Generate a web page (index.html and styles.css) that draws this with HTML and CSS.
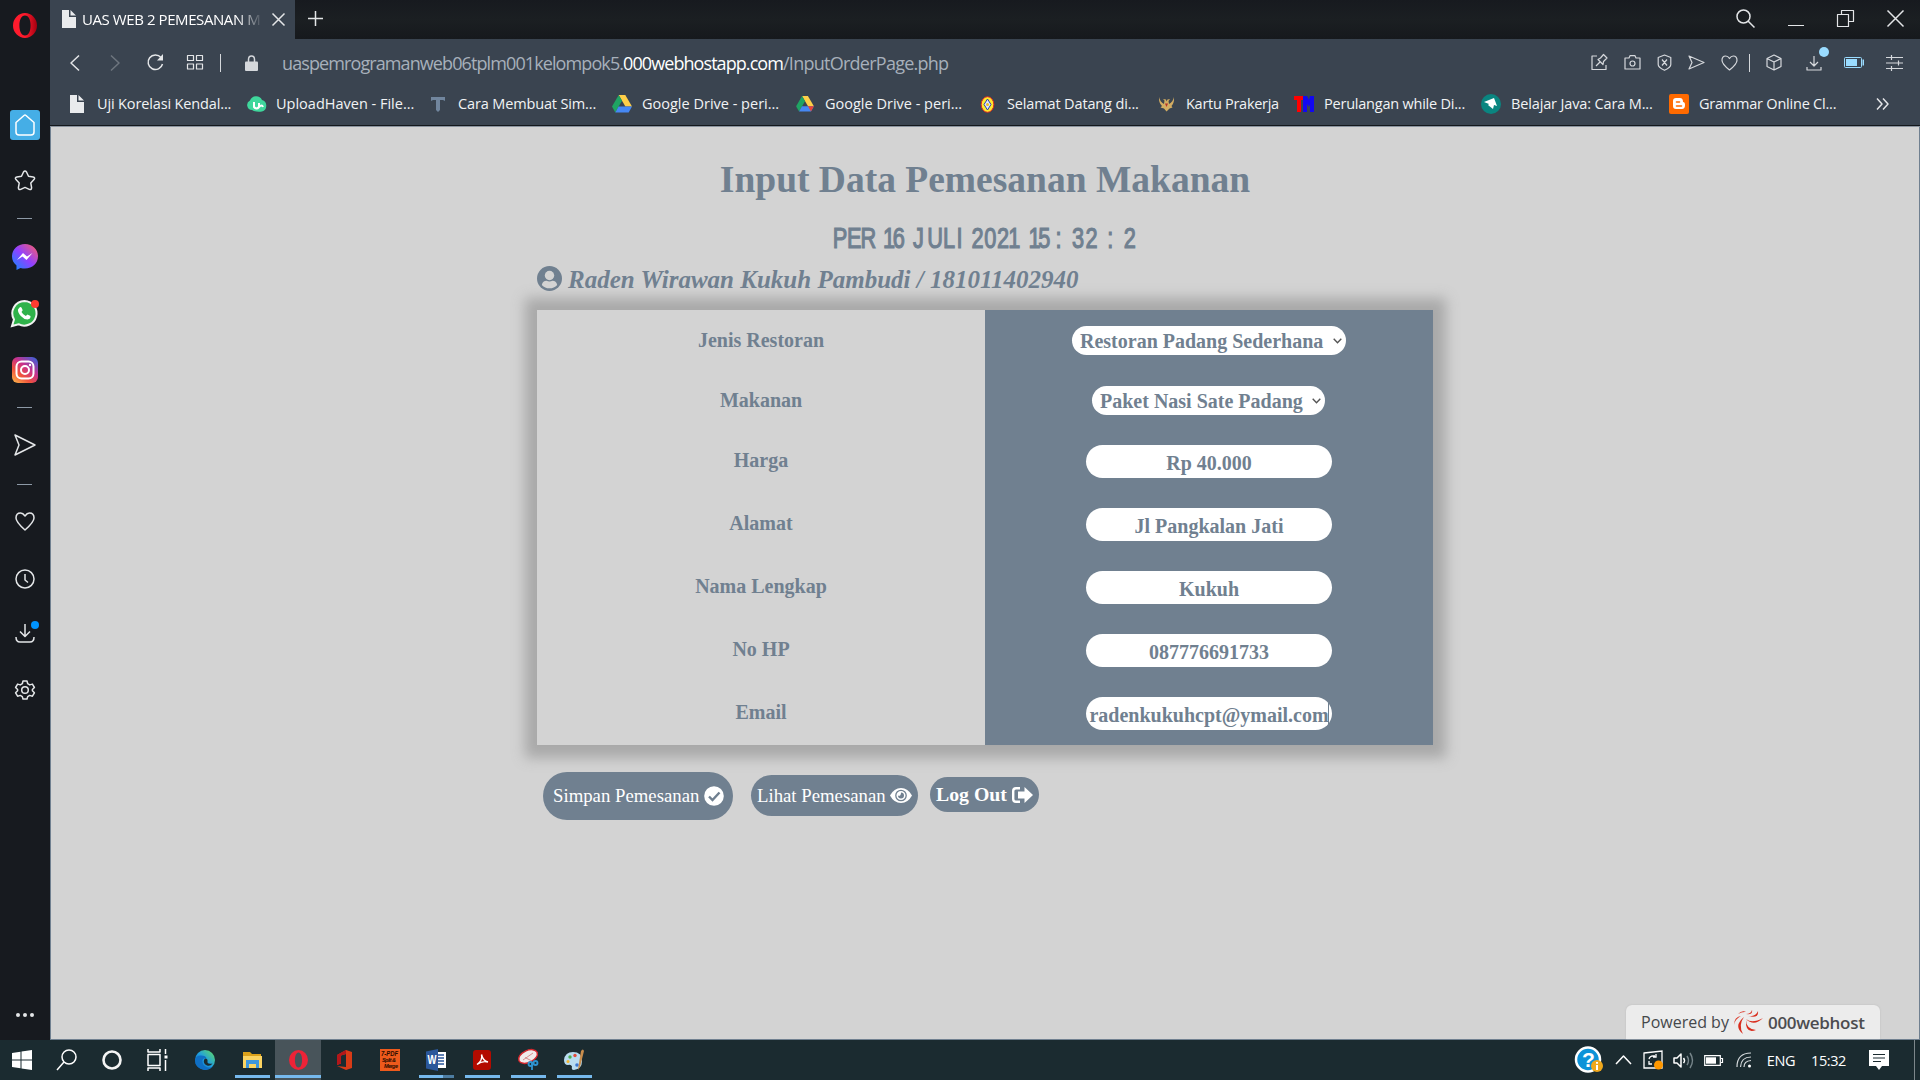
FILE: index.html
```html
<!DOCTYPE html>
<html lang="id">
<head>
<meta charset="utf-8">
<title>UAS WEB 2 PEMESANAN MAKANAN</title>
<link rel="stylesheet" href="styles.css">
</head>
<body>
<svg width="0" height="0" class="defs">
  <defs>
    <linearGradient id="gOpera" x1="0" x2="1"><stop offset="0" stop-color="#ff1b2d"/><stop offset=".5" stop-color="#ff1b2d"/><stop offset="1" stop-color="#a30010"/></linearGradient>
    <linearGradient id="gMsg" x1="0" y1="1" x2="1" y2="0"><stop offset="0" stop-color="#0a8cff"/><stop offset=".5" stop-color="#9240ff"/><stop offset="1" stop-color="#ff6060"/></linearGradient>
    <linearGradient id="gInsta" x1="0" y1="1" x2=".8" y2="0"><stop offset="0" stop-color="#fdc04c"/><stop offset=".35" stop-color="#f0533c"/><stop offset=".65" stop-color="#c8318c"/><stop offset="1" stop-color="#4b5bd0"/></linearGradient>
    <linearGradient id="gEdge" x1="0" y1="1" x2="1" y2="0"><stop offset="0" stop-color="#0b62b8"/><stop offset=".5" stop-color="#1e9de0"/><stop offset="1" stop-color="#66e05c"/></linearGradient>
    <symbol id="drive" viewBox="0 0 20 18"><path d="M6.7 0h6.6L20 11.6h-6.6z" fill="#ffcf48"/><path d="M6.7 0L0 11.6 3.3 17.5 10 5.8z" fill="#1fa463"/><path d="M6.6 11.6H20l-3.3 5.9H3.3z" fill="#4688f4"/></symbol>
    <symbol id="page" viewBox="0 0 14 18"><path d="M0 0h7v7h7v11H0z M8.5 0L14 5.5H8.5z" fill="#e9ebed"/></symbol>
  </defs>
</svg>
<div class="screen">
  <aside class="sidebar">
    <span><svg width="24" height="25"><path d="M12 0a12 12.5 0 1 0 0 25a12 12.5 0 1 0 0-25zM12 2.5c3.8 0 5.6 4.7 5.6 10s-1.8 10-5.6 10-5.6-4.700-5.600-10 1.800-10 5.600-10z" fill="url(#gOpera)" fill-rule="evenodd"/></svg></span>
    <i></i>
    <span><b class="home"><svg width="20" height="22" class="ln"><path d="M1 8.500L9 1.500q1-.8 2 0l8 7V18q0 3-3 3H4q-3 0-3-3z"/></svg></b></span>
    <span><svg width="22" height="21" class="ln"><path d="M9.500 2q1.500-2 3 0l2 4.300 4.600.7q2.500.6.900 2.600l-3.200 3.500.8 4.500q0 2.600-2.300 1.800L11 17.400l-4.300 2q-2.300.8-2.300-1.800l.8-4.500L2 9.600Q.4 7.600 2.900 7l4.600-.7z"/></svg></span>
    <span><hr></span>
    <span><svg width="26" height="26"><path d="M13 0C5.500 0 0 5.300 0 12.500c0 3.700 1.600 6.500 4.500 9V26l4-2.100c1.400.5 3 .7 4.500.7 7.400 0 13-5.300 13-12.300S20.400 0 13 0z" fill="url(#gMsg)"/><path d="M5 16l6-7 4 3.500 5.500-3.500-6 7-4-3.500z" fill="#fff"/></svg></span>
    <span class="badged"><svg width="27" height="27"><path d="M13.500 1A12.300 12.300 0 0 0 3 19.500L1 26l6.500-1.800A12.300 12.300 0 1 0 13.500 1z" fill="#2fb24a" stroke="#f2f2f2" stroke-width="2"/><path d="M8.500 7.500q1.500-1 2.200.5l1 2.200-1.200 1.700q1.400 2.700 4.300 4l1.700-1.500 3 1.500q.4 3-3 3.500-3.500 0-6.700-3.500T7 9.500z" fill="#fff"/></svg><em class="red"></em></span>
    <span><svg width="26" height="26"><rect width="26" height="26" rx="6" fill="url(#gInsta)"/><g fill="none" stroke="#fff" stroke-width="2"><rect x="4.500" y="4.500" width="17" height="17" rx="5"/><circle cx="13" cy="13" r="4"/></g><circle cx="18" cy="8" r="1.200" fill="#fff"/></svg></span>
    <span><hr></span>
    <span><svg width="22" height="22" class="ln"><path d="M1 1l20 10L1 21l4-10z"/></svg></span>
    <span><hr></span>
    <span><svg width="20" height="19" class="ln"><path d="M10 4Q8 1 5.500 1 1 1 1 6q0 4 9 12 9-8 9-12 0-5-4.500-5Q12 1 10 4z"/></svg></span>
    <span><svg width="20" height="20" class="ln"><circle cx="10" cy="10" r="9"/><path d="M10 5v6l3 2.500"/></svg></span>
    <span class="badged"><svg width="20" height="19" class="ln"><path d="M10 0v12M5 7.500l5 5 5-5M1 13q0 5 4 5h10q4 0 4-5"/></svg><em class="blue"></em></span>
    <span><svg width="20" height="20" class="ln"><path d="M8 1h4l.7 2.700 2 1.200 2.700-.8 2 3.400-2 2v1.300l2 2-2 3.400-2.700-.8-2 1.200L12 19H8l-.7-2.400-2-1.200-2.700.8-2-3.400 2-2V9.500l-2-2 2-3.400 2.700.8 2-1.200z"/><circle cx="10" cy="10" r="3.300"/></svg></span>
    <i></i>
    <span><svg width="18" height="4" fill="#e4e6e8"><circle cx="2" cy="2" r="2"/><circle cx="9" cy="2" r="2"/><circle cx="16" cy="2" r="2"/></svg></span>
  </aside>

  <header class="chrome">
    <div class="tabs">
      <div class="tab"><svg width="14" height="18"><use href="#page"/></svg><span class="tabtitle">UAS WEB 2 PEMESANAN M</span><svg width="13" height="13" class="ln"><path d="M.5.500l12 12M12.500.500l-12 12"/></svg></div>
      <svg width="15" height="15" class="ln plus"><path d="M7.500 0v15M0 7.500h15"/></svg>
      <div class="wctl">
        <svg width="19" height="19" class="ln"><circle cx="7.500" cy="7.500" r="6.500"/><path d="M12 12l6.500 6.500"/></svg>
        <svg width="16" height="17" class="ln"><path d="M0 15.500h16" stroke-width="1"/></svg>
        <svg width="17" height="17" class="ln th"><path d="M.5 4.500h11v12H.5zM4.500 4.500v-4h12v11h-5"/></svg>
        <svg width="17" height="17" class="ln"><path d="M.5.500l16 16M16.500.500l-16 16"/></svg>
      </div>
    </div>
    <div class="nav">
      <span><svg width="10" height="16" class="ln"><path d="M9 0.500L1 8l8 7.500"/></svg></span>
      <span class="off"><svg width="10" height="16" class="ln"><path d="M1 .5L9 8l-8 7.500"/></svg></span>
      <span><svg width="17" height="17" class="ln"><path d="M14 3.500A7.300 7.300 0 1 0 15.500 10"/><path d="M16 0v6.500h-6z" fill="#e4e6e8" stroke="none"/></svg></span>
      <span><svg width="16" height="15" class="ln th"><path d="M.5.500h6v5h-6zM9.500.500h6v5h-6zM.5 9h6v5h-6zM9.500 9h6v5h-6z"/></svg></span>
      <span><b class="sep"></b></span>
      <span><svg width="13" height="16"><path d="M3.500 7V4.500q0-3.500 3-3.500t3 3.500V7" fill="none" stroke="#d5d8dc" stroke-width="1.500"/><rect y="6.500" width="13" height="9.500" rx="1" fill="#d5d8dc"/></svg></span>
      <div class="url"><span class="u1">uaspemrogramanweb06tplm001kelompok5.</span><span class="u2">000webhostapp.com</span><span class="u3">/InputOrderPage.php</span></div>
      <div class="tools">
        <span><svg width="17" height="17" class="ln"><path d="M6 2H1v13.500h14V11M5 12l4-4M7 5.500l5 5 .5-3L16 4l-3.500-3.500L9.500 4z"/></svg></span>
        <span><svg width="17" height="15" class="ln"><path d="M1 3h4l1-2.300h5L12 3h4v11H1z"/><circle cx="8.500" cy="8.500" r="2.500"/></svg></span>
        <span><svg width="15" height="17" class="ln"><path d="M7.500 1l6.300 2.500v7q0 3-6.300 5.800Q1.200 13.500 1.200 10.500v-7zM5 5.500l5 6M10 5.500l-5 6"/></svg></span>
        <span><svg width="17" height="15" class="ln"><path d="M1 1l15 6.500L1 14l3-6.500z"/></svg></span>
        <span><svg width="17" height="16" class="ln"><path d="M8.500 3.500Q7 1 4.700 1 1 1 1 5.200 1 9 8.500 15 16 9 16 5.200 16 1 12.300 1 10 1 8.500 3.500z"/></svg></span>
        <span><b class="sep"></b></span>
        <span><svg width="16" height="17" class="ln"><path d="M8 1l7 3.500v8L8 16l-7-3.500v-8zM1 4.500L8 8l7-3.500M8 8v8"/></svg></span>
        <span class="badged"><svg width="16" height="16" class="ln"><path d="M8 1v10M4 7l4 4 4-4M1 12v3h14v-3"/></svg><em class="sky"></em></span>
        <span><svg width="20" height="11"><rect x=".5" y=".5" width="17" height="10" rx="1" fill="none" stroke="#9adcff"/><rect x="2" y="2" width="11" height="7" fill="#9adcff"/><path d="M18.500 2.500h1.500v6h-1.500z" fill="#9adcff"/></svg></span>
        <span><svg width="17" height="16" class="ln th"><path d="M0 2.500h17M0 8h17M0 13.500h17M5.500 0v5M12.500 5.500v5M5.500 11v5"/></svg></span>
      </div>
    </div>
    <nav class="marks">
      <a><s><svg width="14" height="18"><use href="#page"/></svg></s><span>Uji Korelasi Kendal...</span></a>
      <a class="w1"><s><svg width="20" height="16"><path d="M6 14a5 5 0 0 1-2-9.500A6.500 6.500 0 0 1 16 4a6 6 0 0 1 0 11.500q-6 1-10-1.500z" fill="#3fd79c"/><path d="M8 6v5q2.500 3 5 0V7m0 4q3-3 4 0" fill="none" stroke="#fff" stroke-width="2"/></svg></s><span>UploadHaven - File...</span></a>
      <a><s><svg width="16" height="16"><path d="M1 1h14v4l-2-1h-3v10l-2 2-2-2V4H3L1 5z" fill="#71869e"/></svg></s><span>Cara Membuat Sim...</span></a>
      <a class="w1"><s><svg width="20" height="18"><use href="#drive"/></svg></s><span>Google Drive - peri...</span></a>
      <a class="w1"><s><svg width="18" height="16" viewBox="0 0 20 18"><use href="#drive"/><path d="M13.400 11.600H20l-3.300 5.900z" fill="#ea4335"/></svg></s><span>Google Drive - peri...</span></a>
      <a><s><svg width="15" height="17"><ellipse cx="7.500" cy="8.500" rx="6.300" ry="7.800" fill="#ffe92e" stroke="#e02a20"/><path d="M7.500 3l3.500 5.500-3.500 5.500L4 8.500z" fill="#dfe8ff" stroke="#2b3fae"/><circle cx="7.500" cy="8.500" r="1.500" fill="#f0c020"/></svg></s><span>Selamat Datang di...</span></a>
      <a class="w0"><s><svg width="15" height="15"><path d="M0 0q1 5 5 7l.5-3.500L4 2l3 .5.500 2 1-2L11 2 9.500 4l.5 3q4-2 5-7 .5 6-2.500 9l1 1.500-3 1L7.500 14.500 5 11.500l-3.500-1L3 9Q-.5 6 0 0z" fill="#d3ad62"/><path d="M6 6.500h3L7.500 10z" fill="#b3322a"/></svg></s><span>Kartu Prakerja</span></a>
      <a class="w2"><s><svg width="20" height="16"><path d="M0 0h9v4H7v12H3V4H0z" fill="#f00"/><path d="M9 0h4l2 4 1-4h4v16h-4V8l-1 3-2-3v8H9z" fill="#1208f0"/></svg></s><span>Perulangan while Di...</span></a>
      <a><s><svg width="20" height="20"><circle cx="10" cy="10" r="10" fill="#0a8580"/><path d="M3 8l10-4 3 8-3-1-1 4-5-4 1-1z" fill="#fff"/></svg></s><span>Belajar Java: Cara M...</span></a>
      <a class="w2"><s><svg width="20" height="20"><rect width="20" height="20" rx="2" fill="#ff6a00"/><path d="M7 4h4q3 0 3 4 2 0 2 3 0 4-3 4H7q-3 0-3-3V7q0-3 3-3z" fill="#fff"/><path d="M7.500 8h3M7.500 12h5" stroke="#ff6a00" stroke-width="1.600" stroke-linecap="round"/></svg></s><span>Grammar Online Cl...</span></a>
      <svg width="13" height="12" class="ln more"><path d="M1 0.500l5 5.500-5 5.500M7 .5L12 6l-5 5.500"/></svg>
    </nav>
  </header>

  <main class="page">
    <h1>Input Data Pemesanan Makanan</h1>
    <svg class="clock" width="306" height="24">
      <text transform="scale(.75 1)" y="21" x="1 20 38 60 68 81 100 108 127 148 166 175 186 203 220 235 252 262 275 290 298 310 320 338 360 367 380 389">PER 16 JULI 2021 15 : 32 : 2</text>
    </svg>
    <section class="form">
      <h2><svg width="25" height="25" viewBox="0 0 25 25"><circle cx="12.500" cy="12.500" r="12.500" fill="#708090"/><circle cx="12.500" cy="9.500" r="4.700" fill="#d3d3d3"/><path d="M4.800 19q1-4.200 4.700-4.200 3 1.200 6 0 3.700 0 4.700 4.200a10.500 10.500 0 0 1-15.400 0z" fill="#d3d3d3"/></svg><span>Raden Wirawan Kukuh Pambudi / 181011402940</span></h2>
      <div class="table">
        <div class="labels"><label>Jenis Restoran</label><label>Makanan</label><label>Harga</label><label>Alamat</label><label>Nama Lengkap</label><label>No HP</label><label>Email</label></div>
        <div class="fields">
          <div><p class="sel s1"><span>Restoran Padang Sederhana</span><svg width="9" height="6"><path d="M.7.700l3.800 4 3.800-4" fill="none" stroke="#555" stroke-width="1.400"/></svg></p></div>
          <div><p class="sel s2"><span>Paket Nasi Sate Padang</span><svg width="9" height="6"><path d="M.7.700l3.800 4 3.800-4" fill="none" stroke="#555" stroke-width="1.400"/></svg></p></div>
          <div><p class="inp">Rp 40.000</p></div>
          <div><p class="inp">Jl Pangkalan Jati</p></div>
          <div><p class="inp">Kukuh</p></div>
          <div><p class="inp">087776691733</p></div>
          <div><p class="inp focus">radenkukuhcpt@ymail.com</p></div>
        </div>
      </div>
      <div class="buttons">
        <button class="b1">Simpan Pemesanan<svg width="20" height="20"><circle cx="10" cy="10" r="9.800" fill="#fff"/><path d="M5 10.500l3.500 3.500 7-7.500" fill="none" stroke="#708090" stroke-width="2.400"/></svg></button>
        <button class="b2">Lihat Pemesanan<svg width="22" height="15"><path d="M0 7.500Q4 0 11 0t11 7.500Q18 15 11 15T0 7.500z" fill="#fff"/><circle cx="11" cy="7.500" r="5.200" fill="none" stroke="#708090" stroke-width="1.300"/><path d="M11 4.500a3 3 0 1 1-3 3q1.500.7 2.300-.3T11 4.500z" fill="#708090"/></svg></button>
        <button class="b3">Log Out<svg width="21" height="16"><path d="M8 1.200H4Q1.200 1.200 1.200 4v8q0 2.800 2.800 2.800h4" fill="none" stroke="#fff" stroke-width="2.400"/><path d="M12.500 0L21 8l-8.500 8v-4.500H6v-7h6.500z" fill="#fff"/></svg></button>
      </div>
    </section>
    <div class="powered"><span class="pw">Powered by</span><svg width="29" height="24"><g fill="#d92c1c"><path d="M10 7q-6 8-1 17Q-1 16 10 7z"/><path d="M12 10q0 9 10 10-11 4-10-10z"/><path d="M12 9q6 5 17-1-9 9-17 1z"/><path d="M14 6q8 1 10-5 1 8-10 5z"/><path d="M7 6q-6 3-7 9 0-8 7-9zM12 4q5 0 6-4 1 5-6 4zM4 4q4-4 8-2-4-.5-8 2z"/></g></svg><span class="wh">000webhost</span></div>
  </main>

  <footer class="taskbar">
    <span><svg width="20" height="20" fill="#fff"><path d="M0 3l8.500-1.200v7.700H0zM9.500 1.600L20 0v9.500H9.500zM0 10.500h8.500v7.700L0 17zM9.500 10.500H20V20L9.500 18.400z"/></svg></span>
    <span><svg width="21" height="22" class="ln w"><circle cx="13" cy="8" r="7"/><path d="M8 13l-7 8"/></svg></span>
    <span><svg width="20" height="20"><circle cx="10" cy="10" r="8.500" fill="none" stroke="#f4f4f4" stroke-width="2.600"/></svg></span>
    <span><svg width="21" height="22" class="ln w"><path d="M1 0v3h12V0M1 22v-3h12v3M1 5.500h12v11H1zM18.500 0v5M18.500 11v11"/><path d="M17.500 6.500h3v3h-3z" fill="#fff" stroke="none"/></svg></span>
    <span><svg width="20" height="20"><circle cx="10" cy="10" r="10" fill="url(#gEdge)"/><path d="M0 10Q1 5 6 5.500q5 0 5.500 3-3-1-4 1.500-1 5 4 7 3 1 6 0-4 4-9 2.700Q0 18 0 10z" fill="#0f6fc4"/><path d="M10 8.500q3 0 2.500 3-.5 3 5 2-2 3-5.500 2-4-2-3-5.500z" fill="#1b2b30"/></svg></span>
    <span class="run"><svg width="19" height="18"><path d="M0 1h7l2 2h9v3H0z" fill="#dca11a"/><path d="M0 5h19v12H0z" fill="#fcd462"/><path d="M3 17V9h13v8h-3v-4H6v4z" fill="#3f97dd"/></svg></span>
    <span class="run active"><svg width="19" height="20" viewBox="0 0 24 25"><path d="M12 0a12 12.500 0 1 0 0 25a12 12.500 0 1 0 0-25zM12 3c3 0 4.500 4.700 4.500 9.500S15 22 12 22s-4.500-4.700-4.500-9.500S9 3 12 3z" fill="#ee2337" fill-rule="evenodd"/></svg></span>
    <span><svg width="16" height="20"><path d="M10 0l6 2v16l-6 2-9-4 9 1V4L5 5.500v8L1 15V5z" fill="#d83b17"/><path d="M1 5l9-5v4L5 5.500v8L1 15z" fill="#b3161a"/></svg></span>
    <span><svg width="20" height="22"><rect width="20" height="22" fill="#ee5a1c"/><text x="1" y="7" class="pdf" textLength="17" lengthAdjust="spacingAndGlyphs">7-PDF</text><text x="2" y="13" class="pdf sm" textLength="14">Split &amp;</text><text x="4" y="19" class="pdf sm" textLength="14">Merge</text></svg></span>
    <span class="run split"><svg width="20" height="22"><path d="M12 3h8v16h-8z" fill="#fff"/><path d="M12 6h6M12 9h6M12 12h6M12 15h6" stroke="#2b579a" stroke-width="1.500"/><path d="M0 2.500L12 0v22L0 19.500z" fill="#2b579a"/><text x="1.500" y="15" class="word" textLength="9" lengthAdjust="spacingAndGlyphs">W</text></svg></span>
    <span class="run"><svg width="18" height="20"><rect width="18" height="20" rx="3" fill="#b30b00"/><path d="M8.500 4.500q1.500 5.500-4.500 10 5-4 11-2.500Q10 11 8.500 4.500z" fill="none" stroke="#fff" stroke-width="1.400"/></svg></span>
    <span class="run"><svg width="21" height="22"><ellipse cx="10" cy="7.500" rx="10" ry="6" transform="rotate(-25 10 7.500)" fill="#f1eaea" stroke="#d3272d" stroke-width="1.500"/><path d="M5 11l10-7M7 8.500l6 3" stroke="#d98b8b" stroke-width="1"/><g fill="none" stroke="#2f93cf" stroke-width="1.800"><circle cx="12.500" cy="15" r="2"/><circle cx="17.500" cy="14" r="2"/><path d="M14 13v8"/></g></svg></span>
    <span class="run"><svg width="21" height="22"><path d="M9 3q9 0 9 9 0 8-8 9-3 0-2-3.500-1-2.500-4-1.500-4 0-4-5 1-8 9-8z" fill="#b9dcf0"/><circle cx="6" cy="8" r="1.700" fill="#4caf50"/><circle cx="11" cy="6.500" r="1.700" fill="#e34b3a"/><circle cx="4" cy="12.500" r="1.500" fill="#f2b32c"/><circle cx="13" cy="16" r="1.800" fill="#3c76d0"/><path d="M17 2q2-3 3 0l-4 16-2 3 .5-4z" fill="#c98d4c"/></svg></span>
    <div class="tray">
      <span><svg width="29" height="28"><circle cx="14" cy="13.500" r="12" fill="#0d93d8" stroke="#fff" stroke-width="2.500"/><text x="8" y="21" class="q">?</text><circle cx="23" cy="20" r="6" fill="#f0a81c"/><path d="M23 19v5M23 16v1.800" stroke="#fff" stroke-width="2"/></svg></span>
      <span><svg width="17" height="10" class="ln w"><path d="M1 9l7.500-8L16 9"/></svg></span>
      <span><svg width="20" height="20"><path d="M1 3l18-2v17H1z" fill="none" stroke="#fff" stroke-width="1.300"/><path d="M6 9q1-4 6-3m1-2v3h-3M6 11v3h3" fill="none" stroke="#fff" stroke-width="1.300"/><circle cx="15.500" cy="15" r="4.500" fill="#ff9800"/></svg></span>
      <span><svg width="21" height="17" class="ln w"><path d="M1 6v5h3l4 4V2L4 6zM10.500 6q2 2.500 0 5"/><path d="M14 4q3 4.500 0 9M17 1q5 7.500 0 15" stroke="#77858a"/></svg></span>
      <span><svg width="19" height="11"><path d="M.7.700h15.600v9.600H.7zM17 3.500h1.500v4H17" fill="none" stroke="#fff" stroke-width="1.200"/><path d="M2 2.300h10v6.400H2z" fill="#fff"/></svg></span>
      <span><svg width="17" height="16" class="ln w wifi"><path d="M1 15Q1 1 15 1M4.500 15Q5 5 15 5M8 15Q8 9 15 8.500"/><circle cx="13.500" cy="14" r="1.500" fill="#fff" stroke="none"/></svg></span>
      <span class="eng">ENG</span>
      <span class="time">15:32</span>
      <span><svg width="20" height="20"><path d="M0 0h20v16h-7l-3 4-3-4H0z" fill="#fff"/><path d="M4 4.500h12M4 8h12M4 11.500h8" stroke="#1b2b30" stroke-width="1.200"/></svg></span>
    </div>
  </footer>
</div>
</body>
</html>
```
FILE: styles.css
```css
* { box-sizing: border-box; }
body { margin: 0; width: 1920px; height: 1080px; overflow: hidden; font-family: "Open Sans", "Noto Sans", sans-serif; }
.defs { display: block; height: 0; }
svg { display: block; flex: none; overflow: visible; }
.screen { display: grid; grid-template: 127px 913px 40px / 50px 1870px; width: 1920px; height: 1080px; }
.ln { fill: none; stroke: #e4e6e8; stroke-width: 1.5; stroke-linejoin: round; }
.th { stroke-width: 1.2; }
.ln.w { stroke: #fff; stroke-width: 1.5; }
.ln.wifi { stroke: #d5dadc; stroke-width: 1.2; }
hr { width: 15px; height: 1px; margin: 0; border: 0; background: #8d99a6; }

/* Sidebar */
.sidebar { grid-row: 1 / 3; display: grid; background: #171a1f; padding-right: 1px;
  grid-template-rows: 50px 47px 56px 55px 21px 56px 56px 58px 16px 60px 18px 56px 60px 48px 66px 267px 50px; }
.sidebar > span { display: flex; align-items: center; justify-content: center; }
.home { display: flex; align-items: center; justify-content: center; width: 30px; height: 30px; border-radius: 3px; background: #45aee6; }
.home .ln { stroke: #fff; }
.badged { position: relative; }
.badged em { position: absolute; width: 8px; height: 8px; border-radius: 50%; }
.badged .red { left: 31px; top: 15px; background: #ff3b30; }
.badged .blue { left: 31px; top: 12px; background: #0094ff; }
.badged .sky { width: 10px; height: 10px; left: 24px; top: 8px; background: #9adcff; }

/* Browser chrome */
.chrome { display: grid; grid-template-rows: 39px 47px 39px; background: #3a4450; border-bottom: 1px solid #8a939e; box-shadow: inset 0 -1px #14181c; }
.tabs { display: flex; align-items: center; background: linear-gradient(#171a1f, #1b1f22 50%, #16191d); padding-bottom: 2px; }
.tab { display: flex; align-items: center; width: 245px; height: 39px; padding: 0 0 1px 12px; margin-bottom: -2px; background: #3a4450; }
.tabtitle { width: 181px; margin: 0 9px 0 6px; overflow: hidden; white-space: nowrap; font-size: 15px; letter-spacing: -.42px; color: #fff;
  -webkit-mask-image: linear-gradient(90deg, #000 86%, transparent 100%); mask-image: linear-gradient(90deg, #000 86%, transparent 100%); }
.plus { margin-left: 13px; }
.wctl { display: flex; align-items: center; justify-content: space-between; width: 168px; margin: 0 16px 0 auto; }
.nav { display: grid; grid-template-columns: 49px 32px 48px 32px 18px 45px 1fr 337px; align-items: center; }
.nav > span, .tools > span { display: flex; align-items: center; justify-content: center; height: 47px; }
.off { opacity: .3; }
.sep { width: 1px; height: 18px; background: #d5d8dc; }
.url { display: flex; padding-left: 8px; font-size: 18px; white-space: nowrap; color: #a7b0bb; }
.u1 { letter-spacing: -.9px; }
.u2 { letter-spacing: -.93px; color: #fff; }
.u3 { letter-spacing: -.74px; }
.tools { display: grid; grid-template-columns: 33px 32px 32px 33px 33px 6px 43px 37px 44px 37px; }
.tools .ln { stroke-width: 1.2; stroke: #d5d8dc; }
.marks { display: grid; grid-template-columns: 179px 182px 184px 183px 182px 179px 138px 187px 188px 203px 20px; align-items: center; padding: 0 0 3px 17px; font-size: 14.5px; color: #f1f3f5; white-space: nowrap; }
.marks a { display: flex; align-items: center; letter-spacing: -.14px; }
.marks a span { margin-top: -2px; }
.marks .w1 { letter-spacing: 0; }
.marks .w0 { letter-spacing: -.28px; }
.marks .w2 { letter-spacing: -.22px; }
.marks s { display: flex; justify-content: center; width: 20px; margin-right: 10px; text-decoration: none; }
.more { margin-left: 4px; }

/* Order page */
.page { display: flex; flex-direction: column; align-items: center; background: #d3d3d3; color: #708090; font-family: "Liberation Serif", "Times New Roman", serif;
  border-left: 1px solid #708090; border-right: 1px solid #708090; border-bottom: 1px solid #708090; }
h1 { margin: 30px 0 0; height: 46px; font-size: 37.5px; line-height: 46px; white-space: nowrap; }
.clock { margin-top: 24px; font: 29px "Liberation Sans", Arial, sans-serif; fill: #708090; stroke: #708090; stroke-width: 1.2px; }
.form { width: 896px; }
h2 { display: flex; align-items: center; height: 31px; margin: 11px 0 18px; font-size: 25px; line-height: 31px; font-style: italic; white-space: nowrap; }
h2 svg { margin-top: 2px; }
h2 span { margin-left: 6px; padding-top: 4px; }
.table { display: grid; grid-template-columns: 448px 448px; height: 435px; margin-top: -1px; font-size: 20px; font-weight: bold; box-shadow: 0 0 12.5px 12.5px #a9a9a9; }
.labels, .fields { display: grid; grid-template-rows: 60px 60px repeat(5, 63px); background: #d3d3d3; text-align: center; }
.labels label { padding-top: 19px; line-height: 22px; }
.fields { background: #708090; }
.fields > div { display: flex; align-items: center; justify-content: center; }
.sel, .inp { margin: 0; background: #fff; white-space: nowrap; }
.sel { display: flex; align-items: center; justify-content: space-between; height: 29px; margin-top: 1px; border-radius: 15px; padding: 1px 4px 0 8px; }
.s1 { width: 274px; }
.s2 { width: 233px; margin-right: 1px; }
.inp { width: 246px; height: 33px; border-radius: 16.5px; line-height: 36px; overflow: hidden; }
.focus { background: linear-gradient(#708090, #708090) 242px 6px / 1px 23px no-repeat #fff; }
.buttons { display: flex; align-items: center; margin: 27px 0 0 6px; height: 48px; }
.buttons button { display: flex; align-items: center; justify-content: space-between; border: 0; background: #708090; color: #fff; font-family: inherit; font-size: 18.75px; white-space: nowrap; }
.buttons .b1 { width: 190px; height: 48px; border-radius: 24px; padding: 0 9px 0 10px; }
.buttons .b2 { width: 167px; height: 41px; border-radius: 21px; margin: -1px 0 0 18px; padding: 0 6px; }
.buttons .b3 { width: 109px; height: 35px; border-radius: 18px; margin: -3px 0 0 12px; padding: 0 6px; font-size: 19.8px; font-weight: bold; }
.powered { display: flex; align-items: center; align-self: flex-end; width: 254px; height: 34px; margin: auto 39px 0 0; padding-left: 15px; border-radius: 6px 6px 0 0; background: #ececec; color: #45484b; font: 16px "Open Sans", sans-serif; box-shadow: 0 0 2px #bbb; white-space: nowrap; }
.pw { width: 93px; }
.wh { margin-left: 5px; font-size: 17px; font-weight: 600; letter-spacing: -.3px; color: #4c4c50; }

/* Taskbar */
.taskbar { grid-column: 1 / 3; display: grid; align-items: center; background: #1b2b30; color: #fff;
  grid-template-columns: 44px 45px 45px 47px 48px 46px 46px 46px 46px 46px 46px 46px 46px 1fr; }
.taskbar > span { position: relative; display: flex; align-items: center; justify-content: center; height: 40px; }
.run::after { content: ""; position: absolute; bottom: 2px; left: 6px; width: 35px; height: 3px; background: #76b9ed; }
.run.active { background: #48545a; }
.run.active::after { left: 0; width: 46px; }
.run.split::after { background: linear-gradient(90deg, #76b9ed 24px, #4d7da2 24px); }
.pdf { font: italic bold 7px "Liberation Sans", sans-serif; fill: #2a0d00; }
.pdf.sm { font-size: 5.5px; }
.word { font: bold 12px "Liberation Sans", sans-serif; fill: #fff; }
.q { font: bold 21px "Liberation Sans", sans-serif; fill: #fff; }
.tray { display: grid; grid-template-columns: 40px 30px 30px 30px 31px 31px 42px 53px 48px; align-items: center; justify-self: end; height: 40px; margin-right: 5px; padding-right: 11px; border-right: 1px solid #7d878b; font-size: 14.5px; }
.tray span { display: flex; align-items: center; justify-content: center; }
.eng { letter-spacing: -.4px; }
.time { letter-spacing: -.4px; }
```
